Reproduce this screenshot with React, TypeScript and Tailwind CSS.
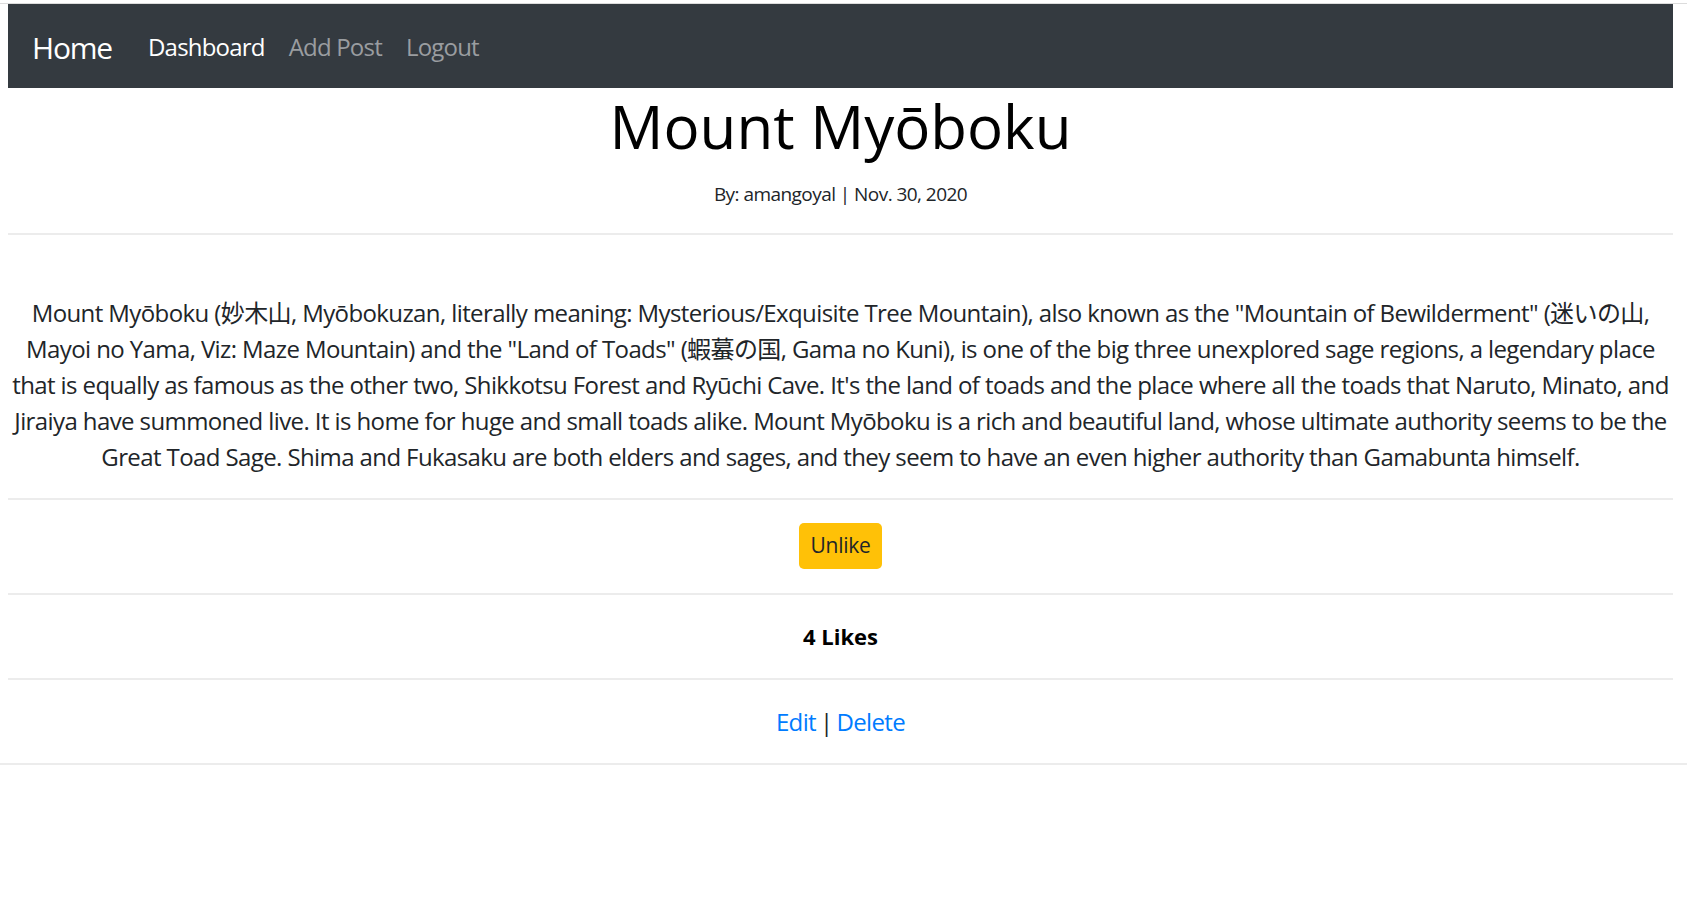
import React from 'react';

const PostDetail = () => {
  const lines = [
    'Mount Myōboku (妙木山, Myōbokuzan, literally meaning: Mysterious/Exquisite Tree Mountain), also known as the "Mountain of Bewilderment" (迷いの山,',
    'Mayoi no Yama, Viz: Maze Mountain) and the "Land of Toads" (蝦蟇の国, Gama no Kuni), is one of the big three unexplored sage regions, a legendary place',
    "that is equally as famous as the other two, Shikkotsu Forest and Ryūchi Cave. It's the land of toads and the place where all the toads that Naruto, Minato, and",
    'Jiraiya have summoned live. It is home for huge and small toads alike. Mount Myōboku is a rich and beautiful land, whose ultimate authority seems to be the',
    'Great Toad Sage. Shima and Fukasaku are both elders and sages, and they seem to have an even higher authority than Gamabunta himself.',
  ];

  return (
    <div className="min-h-screen bg-white text-[#212529] font-['Open_Sans','Noto_Sans_CJK_JP',sans-serif]">
      <div className="h-[3px]"></div>
      <div className="h-px bg-[#dcdcdc]"></div>

      <div className="pl-2 pr-[14px]">
        {/* Navbar */}
        <nav className="h-[84px] bg-[#343a40] flex items-center px-6 pt-[2px]">
          <a href="#" className="text-[30px] leading-[45px] tracking-[-1.2px] text-white mr-6">Home</a>
          <a href="#" className="px-3 text-[24px] leading-[36px] tracking-[-0.8px] text-white">Dashboard</a>
          <a href="#" className="px-3 text-[24px] leading-[36px] tracking-[-0.8px] text-[#9a9da0]">Add Post</a>
          <a href="#" className="px-3 text-[24px] leading-[36px] tracking-[-0.8px] text-[#9a9da0]">Logout</a>
        </nav>

        {/* Title */}
        <h1 className="text-center text-[60px] leading-[72px] font-medium text-black mt-[2px]">Mount Myōboku</h1>
        <p className="text-center text-[19px] leading-[29px] tracking-[-0.55px] mt-[18px]">By: amangoyal | Nov. 30, 2020</p>
        <div className="mt-[24px] border-t-2 border-[#ececec]"></div>

        {/* Body */}
        <p className="mt-[60px] text-center text-[24px] leading-[36px] tracking-[-0.6px] whitespace-nowrap">
          {lines.map((line, i) => (
            <React.Fragment key={i}>
              {line}
              {i < lines.length - 1 && <br />}
            </React.Fragment>
          ))}
        </p>
        <div className="mt-[23px] border-t-2 border-[#ececec]"></div>

        <div className="flex justify-center pt-[23px] pb-[24px]">
          <button className="h-[46px] px-[12px] rounded-[5px] bg-[#ffc107] text-[21px] tracking-[-0.3px] text-[#212529]">Unlike</button>
        </div>
        <div className="border-t-2 border-[#ececec]"></div>

        <div className="h-[83px] flex items-center justify-center">
          <strong className="text-[22px] font-bold text-black">4 Likes</strong>
        </div>
        <div className="border-t-2 border-[#ececec]"></div>

        <div className="h-[83px] flex items-center justify-center text-[24px] tracking-[-0.65px]">
          <a href="#" className="text-[#007bff]">Edit</a>
          <span className="mx-[4px]">|</span>
          <a href="#" className="text-[#007bff]">Delete</a>
        </div>
      </div>
      <div className="border-t-2 border-[#ececec]"></div>
    </div>
  );
};

export default PostDetail;
